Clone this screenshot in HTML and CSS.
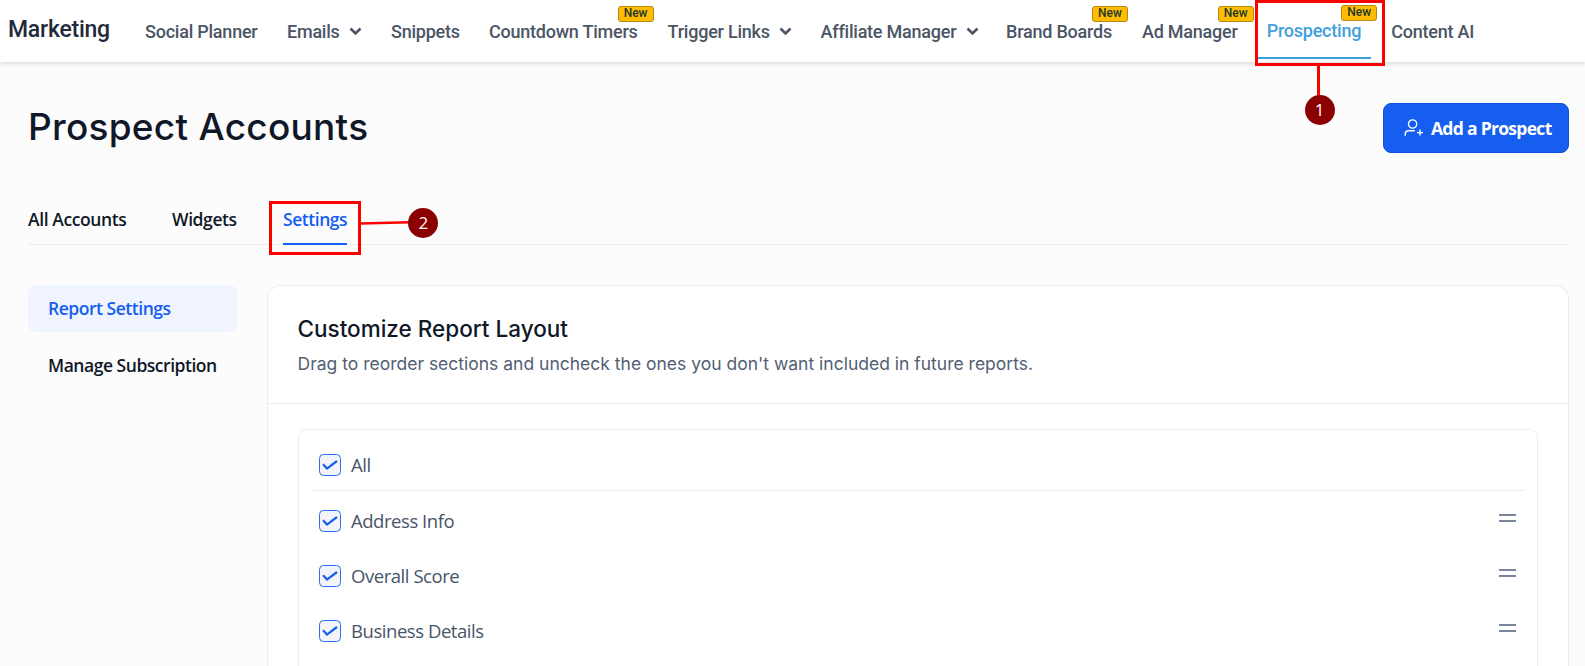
FILE: index.html
```html
<!DOCTYPE html>
<html lang="en">

<head>
    <meta charset="UTF-8">
    <meta name="viewport" content="width=device-width, initial-scale=1.0">
    <title>Prospect Accounts</title>
    <link rel="stylesheet" href="styles.css">
</head>

<body>
    <header class="topbar">
        <div class="brand">Marketing</div>
        <nav class="nav">
            <a class="nav-item social">Social Planner</a>
            <a class="nav-item emails">Emails <svg class="chevron" viewBox="0 0 13 9"><path d="M1.5 1.5l5 5 5-5"/></svg></a>
            <a class="nav-item snippets">Snippets</a>
            <a class="nav-item countdown">Countdown Timers<span class="badge">New</span></a>
            <a class="nav-item trigger">Trigger Links <svg class="chevron" viewBox="0 0 13 9"><path d="M1.5 1.5l5 5 5-5"/></svg></a>
            <a class="nav-item affiliate">Affiliate Manager <svg class="chevron" viewBox="0 0 13 9"><path d="M1.5 1.5l5 5 5-5"/></svg></a>
            <a class="nav-item boards">Brand Boards<span class="badge">New</span></a>
            <a class="nav-item ads">Ad Manager<span class="badge">New</span></a>
            <a class="nav-item active">Prospecting<span class="badge">New</span></a>
            <a class="nav-item content-ai">Content AI</a>
        </nav>
    </header>

    <main class="page">
        <div class="page-head">
            <h1>Prospect Accounts</h1>
            <button class="add-button" type="button">
                <svg class="user-icon" viewBox="0 0 20 18"><circle cx="8.6" cy="5" r="4.1"/><path d="M1.2 16.8v-1.3c0-2.3 1.5-3.7 3.6-3.7h6M13 13.600h6M16 10.600v6"/></svg>
                <span>Add a Prospect</span>
            </button>
        </div>

        <div class="tabs">
            <a class="tab tab-all">All Accounts</a>
            <a class="tab tab-widgets">Widgets</a>
            <a class="tab selected">Settings</a>
        </div>

        <div class="columns">
            <aside class="side">
                <a class="side-item current">Report Settings</a>
                <a class="side-item">Manage Subscription</a>
            </aside>

            <section class="card">
                <div class="card-head">
                    <h2>Customize Report Layout</h2>
                    <p>Drag to reorder sections and uncheck the ones you don't want included in future reports.</p>
                </div>
                <div class="list">
                    <div class="row all">
                        <svg class="check" viewBox="0 0 22 22"><rect x=".5" y=".5" width="21" height="21" rx="4"/><path d="M4 10.300l4 4.300L18 7"/></svg>
                        <span>All</span>
                    </div>
                    <div class="row">
                        <svg class="check" viewBox="0 0 22 22"><rect x=".5" y=".5" width="21" height="21" rx="4"/><path d="M4 10.300l4 4.300L18 7"/></svg>
                        <span>Address Info</span>
                        <i class="handle"></i>
                    </div>
                    <div class="row">
                        <svg class="check" viewBox="0 0 22 22"><rect x=".5" y=".5" width="21" height="21" rx="4"/><path d="M4 10.300l4 4.300L18 7"/></svg>
                        <span>Overall Score</span>
                        <i class="handle"></i>
                    </div>
                    <div class="row">
                        <svg class="check" viewBox="0 0 22 22"><rect x=".5" y=".5" width="21" height="21" rx="4"/><path d="M4 10.300l4 4.300L18 7"/></svg>
                        <span>Business Details</span>
                        <i class="handle"></i>
                    </div>
                </div>
            </section>
        </div>
    </main>

    <!-- step markers -->
    <div class="frame frame-one"></div>
    <div class="line-one"></div>
    <div class="step step-one">1</div>
    <div class="frame frame-two"></div>
    <svg class="line-two" viewBox="0 0 50 6"><path d="M0 3.500L50 2.300"/></svg>
    <div class="step step-two">2</div>
</body>

</html>
```
FILE: styles.css
```css
* {
    box-sizing: border-box;
}
body {
    margin: 0;
    height: 666px;
    overflow: hidden;
    position: relative;
    background-color: #fcfcfc;
    font-family: "Open Sans", "Noto Sans", sans-serif;
    color: #101828;
}

.topbar {
    display: flex;
    height: 62px;
    padding-left: 8px;
    background-color: #fff;
    box-shadow: 0 1px 5px rgba(0, 0, 0, 0.18);
    font-family: Roboto, sans-serif;
    font-weight: 500;
    white-space: nowrap;
}
.brand {
    width: 137px;
    font-size: 23px;
    line-height: 60px;
    letter-spacing: -0.25px;
    color: #1f2a3b;
}
.nav {
    display: flex;
}
.nav-item {
    position: relative;
    font-size: 18px;
    line-height: 63px;
    letter-spacing: -0.23px;
    color: #4b5565;
}
.social {
    width: 142px;
}
.emails {
    width: 104px;
}
.snippets {
    width: 98px;
}
.countdown,
.boards {
    margin-right: 30px;
}
.trigger {
    width: 153px;
}
.affiliate {
    width: 185.5px;
}
.ads {
    margin-right: 29px;
}
.chevron {
    width: 13px;
    height: 9px;
    margin-left: 5px;
    vertical-align: 2px;
    fill: none;
    stroke: #4b5565;
    stroke-width: 2.6;
}
.badge {
    position: absolute;
    right: -16px;
    top: 6px;
    width: 36px;
    height: 16px;
    border: 1px solid #b58a10;
    border-radius: 3px;
    background-color: #ffbc00;
    color: #22392f;
    font-size: 12px;
    line-height: 13px;
    letter-spacing: 0;
    text-align: center;
}
.active {
    top: -1px;
    margin-right: 30px;
    color: #3fa0dc;
}
.active::after {
    content: "";
    position: absolute;
    left: -10px;
    right: -10px;
    top: 58px;
    height: 2px;
    background-color: #38a0db;
}

.page {
    padding: 41px 16px 0 28px;
}
.page-head {
    display: flex;
    justify-content: space-between;
    height: 50px;
}
h1 {
    margin: 0;
    font-family: Inter, sans-serif;
    font-size: 37px;
    font-weight: 450;
    line-height: 47px;
    letter-spacing: 0.27px;
}
.add-button {
    display: flex;
    align-items: center;
    width: 186px;
    height: 50px;
    padding: 0 0 0 20px;
    border: 1px solid #0f50e8;
    border-radius: 8px;
    background-color: #155eef;
    color: #fff;
    font-family: "Open Sans", sans-serif;
    font-size: 17.5px;
    font-weight: 700;
    letter-spacing: -0.7px;
    white-space: nowrap;
}
.user-icon {
    width: 20px;
    height: 18px;
    margin-right: 7px;
    fill: none;
    stroke: #fff;
    stroke-width: 1.4;
}

.tabs {
    display: flex;
    height: 92px;
    padding-top: 49px;
    border-bottom: 1px solid #eaecf0;
    font-size: 17.5px;
    font-weight: 600;
    line-height: 34px;
    letter-spacing: -0.4px;
    white-space: nowrap;
}
.tab-all {
    width: 144px;
}
.tab-widgets {
    width: 111px;
}
.selected {
    width: 64px;
    height: 43px;
    border-bottom: 2px solid #155eef;
    color: #155eef;
    letter-spacing: -0.45px;
}

.columns {
    display: flex;
    gap: 30px;
    padding-top: 40px;
}
.side {
    width: 209px;
}
.side-item {
    display: block;
    height: 47px;
    margin-bottom: 10px;
    padding-left: 20px;
    border-radius: 8px;
    font-size: 17.5px;
    font-weight: 600;
    line-height: 47px;
    letter-spacing: -0.47px;
    white-space: nowrap;
}
.current {
    background-color: #eff4ff;
    color: #155eef;
}

.card {
    flex: 1;
    height: 381px;
    border: 1px solid #eaecf0;
    border-bottom: 0;
    border-radius: 14px 14px 0 0;
    background-color: #fff;
}
.card-head {
    height: 118px;
    padding: 28px 29px 0 29.5px;
    border-bottom: 1px solid #eaecf0;
    font-family: Inter, sans-serif;
}
h2 {
    margin: 0;
    font-size: 22.5px;
    font-weight: 450;
    line-height: 30px;
}
.card-head p {
    margin: 5px 0 0;
    font-size: 17.5px;
    line-height: 30px;
    color: #526074;
}
.list {
    height: 237px;
    margin: 25px 30px 0;
    padding: 7px 12px 0;
    border: 1px solid #eaecf0;
    border-bottom: 0;
    border-radius: 9px 9px 0 0;
}
.row {
    display: flex;
    align-items: center;
    height: 55px;
    padding: 4px 9.5px 0 8px;
    font-size: 18.5px;
    letter-spacing: -0.45px;
    color: #475467;
}
.all {
    height: 54px;
    padding-top: 2px;
    border-bottom: 1px solid #eaecf0;
}
.check {
    width: 22px;
    height: 22px;
    margin-right: 10px;
    fill: #f2f4f9;
    stroke: #2b6cf3;
}
.check path {
    fill: none;
    stroke: #155eef;
    stroke-width: 2.2;
}
.handle {
    width: 17px;
    height: 8px;
    margin: 0 0 5px auto;
    border-top: 2px solid #7a869b;
    border-bottom: 2px solid #7a869b;
}

.frame {
    position: absolute;
    border: 3px solid #f00;
}
.frame-one {
    left: 1255px;
    top: 0;
    width: 130px;
    height: 66px;
}
.frame-two {
    left: 269px;
    top: 201px;
    width: 92px;
    height: 54px;
}
.line-one {
    position: absolute;
    left: 1317px;
    top: 65px;
    width: 3px;
    height: 32px;
    background-color: #f00;
}
.line-two {
    position: absolute;
    left: 360px;
    top: 220px;
    width: 50px;
    height: 6px;
    stroke: #f00;
    stroke-width: 2.5;
}
.step {
    position: absolute;
    width: 30px;
    height: 30px;
    border-radius: 50%;
    background-color: #8b0000;
    color: #fff;
    font-size: 17px;
    line-height: 29px;
    text-align: center;
}
.step-one {
    left: 1304.5px;
    top: 94.5px;
}
.step-two {
    left: 408.4px;
    top: 207.5px;
}
```
